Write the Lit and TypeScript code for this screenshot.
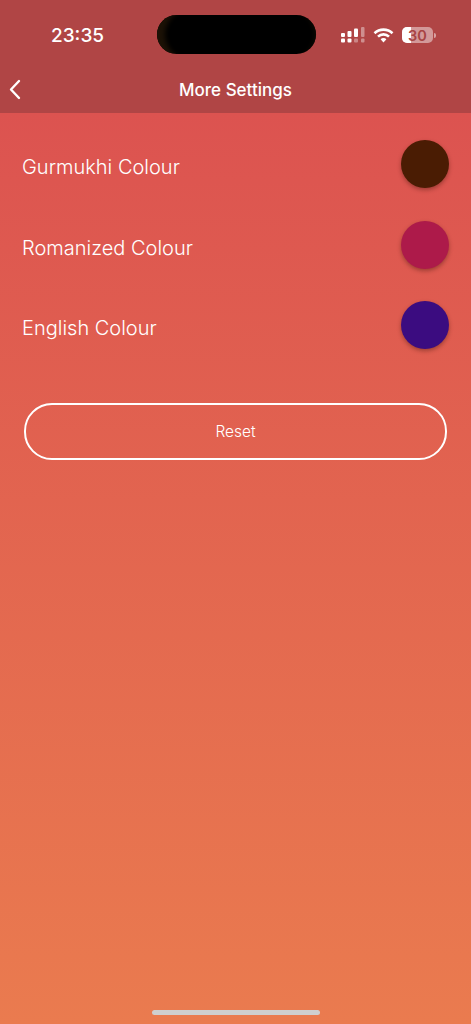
import { LitElement, html, css } from "lit";
import { customElement } from "lit/decorators.js";

@customElement("app-root")
export class AppRoot extends LitElement {
  static styles = css`
    :host {
      display: flex;
      flex-direction: column;
      width: 471px;
      height: 1024px;
      overflow: hidden;
      font-family: Inter, "Liberation Sans", sans-serif;
      color: #fff;
      background: linear-gradient(180deg, #dc5350 0%, #dc5350 11%, #ea7b4f 100%);
    }
    header {
      background: #b04545;
      height: 113px;
      box-sizing: border-box;
      flex: none;
    }
    .status {
      height: 70px;
      display: flex;
      align-items: flex-start;
      padding-top: 15px;
      box-sizing: border-box;
    }
    .time {
      width: 157px;
      box-sizing: border-box;
      padding-left: 51px;
      font-size: 19px;
      font-weight: 500;
      line-height: 41px;
    }
    .island {
      width: 159px;
      height: 39px;
      border-radius: 20px;
      background: #000;
      box-shadow: inset 14px 0 5px -6px #1c1206, inset -8px 0 5px -6px #0d0a04;
      flex: none;
    }
    .indicators {
      display: flex;
      align-items: center;
      height: 40px;
      padding-left: 25px;
      gap: 8px;
    }
    .signal { width: 24px; height: 16px; display: block; }
    .wifi { width: 21px; height: 16px; display: block; }
    .battery {
      position: relative;
      width: 31px;
      height: 16px;
      border-radius: 5px;
      background: rgba(255,255,255,0.45);
      display: flex;
      align-items: center;
      justify-content: center;
      font-size: 14.5px;
      font-weight: 600;
      color: #a84444;
    }
    .fill {
      position: absolute;
      left: 0;
      top: 0;
      bottom: 0;
      width: 9px;
      background: #fff;
      border-radius: 5px 0 0 5px;
    }
    .battery span { position: relative; }
    .cap {
      position: absolute;
      right: -3px;
      top: 5.5px;
      width: 2px;
      height: 5px;
      border-radius: 0 2px 2px 0;
      background: rgba(255,255,255,0.5);
    }
    nav {
      position: relative;
      height: 43px;
      padding-bottom: 3px;
      box-sizing: border-box;
      display: flex;
      align-items: center;
      justify-content: center;
      font-size: 17px;
      font-weight: 500;
    }
    .back {
      position: absolute;
      left: 8px;
      top: 9px;
      width: 13px;
      height: 21px;
      display: block;
    }
    main {
      flex: 1;
      display: flex;
      flex-direction: column;
      padding: 27px 22px 0 22px;
    }
    .row {
      display: flex;
      justify-content: space-between;
      align-items: flex-start;
      height: 80.5px;
    }
    .label {
      font-size: 20px;
      font-weight: 300;
      line-height: 24px;
      padding-top: 15px;
    }
    .swatch {
      width: 48px;
      height: 48px;
      border-radius: 50%;
      box-shadow: 0 2px 4px rgba(60, 20, 10, 0.4);
    }
    .reset {
      margin: 21.5px 2px 0 2px;
      height: 56.5px;
      box-sizing: border-box;
      border: 2.5px solid #fff;
      border-radius: 28px;
      display: flex;
      align-items: center;
      justify-content: center;
      font-size: 15.5px;
      font-weight: 300;
    }
    .home {
      flex: none;
      width: 168px;
      height: 5px;
      border-radius: 3px;
      background: #cfcfcf;
      margin: 0 auto 9px;
    }
  `;

  render() {
    const rows = [
      ["Gurmukhi Colour", "#4a1c03"],
      ["Romanized Colour", "#ad1a4a"],
      ["English Colour", "#3b0c80"],
    ];
    return html`
      <header>
        <div class="status">
          <div class="time">23:35</div>
          <div class="island"></div>
          <div class="indicators">
            <svg class="signal" viewBox="0 0 24 16">
              <g fill="#fff">
                <rect x="0" y="6" width="4" height="4" rx="1" />
                <rect x="0" y="11.5" width="4" height="4" rx="1" />
                <rect x="6.5" y="4" width="4" height="6" rx="1" />
                <rect x="6.5" y="11.5" width="4" height="4" rx="1" />
                <rect x="13" y="1.5" width="4" height="8.5" rx="1" />
                <rect x="13" y="11.5" width="4" height="4" rx="1" opacity=".35" />
              </g>
              <g fill="#fff" opacity=".4">
                <rect x="20" y="0" width="3.5" height="10" rx="1" />
                <rect x="20" y="11.5" width="3.5" height="4" rx="1" />
              </g>
            </svg>
            <svg class="wifi" viewBox="0 0 21 16">
              <path d="M1.5 6.2a13 13 0 0 1 18 0" fill="none" stroke="#fff" stroke-width="2.6" />
              <path d="M5 9.6a8 8 0 0 1 11 0" fill="none" stroke="#fff" stroke-width="2.6" />
              <path d="M7.6 12.2a4 4 0 0 1 5.8 0L10.5 15.4z" fill="#fff" />
            </svg>
            <div class="battery">
              <div class="fill"></div>
              <span>30</span>
              <div class="cap"></div>
            </div>
          </div>
        </div>
        <nav>
          <svg class="back" viewBox="0 0 13 21">
            <path d="M11 2L3 10.5L11 19" fill="none" stroke="#fff" stroke-width="2.4" stroke-linecap="round" stroke-linejoin="round" />
          </svg>
          More Settings
        </nav>
      </header>
      <main>
        ${rows.map(
          ([name, color]) => html`
            <div class="row">
              <div class="label">${name}</div>
              <div class="swatch" style="background:${color}"></div>
            </div>
          `
        )}
        <div class="reset">Reset</div>
      </main>
      <div class="home"></div>
    `;
  }
}
